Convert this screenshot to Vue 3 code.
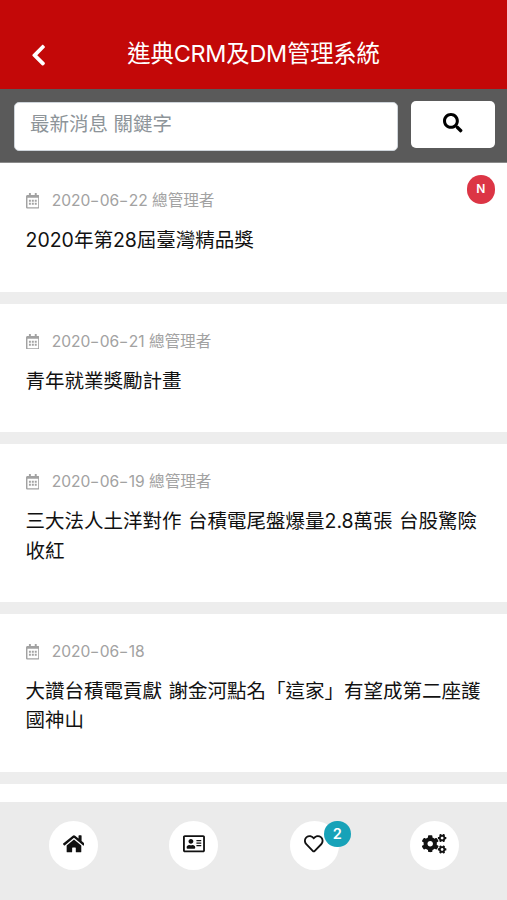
<template>
  <div class="app">
    <header class="topbar">
      <button type="button" class="topbar__back" aria-label="返回">
        <svg viewBox="0 0 320 512">
          <path :d="icons.back" />
        </svg>
      </button>
      <h1 class="topbar__title">進典CRM及DM管理系統</h1>
    </header>

    <form class="search" @submit.prevent>
      <input
        v-model="keyword"
        class="search__input"
        type="text"
        placeholder="最新消息 關鍵字"
      />
      <button type="submit" class="search__button" aria-label="搜尋">
        <svg viewBox="0 0 512 512">
          <path :d="icons.search" />
        </svg>
      </button>
    </form>

    <main class="news">
      <article v-for="item in news" :key="item.title" class="news__item">
        <div class="news__meta">
          <svg class="news__icon" viewBox="0 0 448 512">
            <path :d="icons.calendar" />
          </svg>
          <span>
            <template v-for="(part, i) in item.date.split('-')" :key="i"
              ><span v-if="i" class="news__dash">-</span>{{ part }}</template
            >
            {{ item.author }}
          </span>
        </div>
        <h2 class="news__title">{{ item.title }}</h2>
        <span v-if="item.isNew" class="news__badge">N</span>
      </article>
      <div class="news__item news__item--next"></div>
    </main>

    <nav class="tabs">
      <a v-for="tab in tabs" :key="tab.name" class="tabs__link" :aria-label="tab.label">
        <svg :class="`tabs__icon tabs__icon--${tab.name}`" :viewBox="tab.viewBox">
          <path :d="icons[tab.name]" />
          <template v-if="tab.name === 'cogs'">
            <path :d="icons.smallCog" />
            <path :d="icons.smallCog" transform="translate(0 300)" />
          </template>
        </svg>
        <span v-if="tab.count" class="tabs__badge">{{ tab.count }}</span>
      </a>
    </nav>
  </div>
</template>

<script setup>
import { ref } from "vue";

const keyword = ref("");

const news = [
  {
    date: "2020-06-22",
    author: "總管理者",
    title: "2020年第28屆臺灣精品獎",
    isNew: true,
  },
  {
    date: "2020-06-21",
    author: "總管理者",
    title: "青年就業獎勵計畫",
  },
  {
    date: "2020-06-19",
    author: "總管理者",
    title: "三大法人土洋對作 台積電尾盤爆量2.8萬張 台股驚險收紅",
  },
  {
    date: "2020-06-18",
    author: "",
    title: "大讚台積電貢獻 謝金河點名「這家」有望成第二座護國神山",
  },
];

const tabs = [
  { name: "home", label: "首頁", viewBox: "0 0 576 512" },
  { name: "card", label: "名片", viewBox: "0 0 576 512" },
  { name: "heart", label: "收藏", viewBox: "0 0 512 512", count: 2 },
  { name: "cogs", label: "設定", viewBox: "0 0 640 512" },
];

const icons = {
  back: "M34.52 239.03L228.87 44.69c9.37-9.37 24.57-9.37 33.94 0l22.67 22.67c9.36 9.36 9.37 24.52.04 33.9L131.49 256l154.02 154.75c9.34 9.38 9.32 24.54-.04 33.9l-22.67 22.67c-9.37 9.37-24.57 9.37-33.94 0L34.52 272.97c-9.37-9.37-9.37-24.57 0-33.94z",
  search:
    "M505 442.7L405.3 343c-4.5-4.5-10.6-7-17-7H372c27.6-35.3 44-79.7 44-128C416 93.1 322.9 0 208 0S0 93.1 0 208s93.1 208 208 208c48.3 0 92.7-16.4 128-44v16.3c0 6.4 2.5 12.5 7 17l99.7 99.7c9.4 9.4 24.6 9.4 33.9 0l28.3-28.3c9.4-9.4 9.4-24.6.1-34zM208 336c-70.7 0-128-57.2-128-128 0-70.7 57.2-128 128-128 70.7 0 128 57.2 128 128 0 70.7-57.2 128-128 128z",
  calendar:
    "M400 64h-48V12c0-6.6-5.4-12-12-12h-40c-6.6 0-12 5.4-12 12v52H160V12c0-6.6-5.4-12-12-12h-40c-6.6 0-12 5.4-12 12v52H48C21.5 64 0 85.5 0 112v352c0 26.5 21.5 48 48 48h352c26.5 0 48-21.5 48-48V112c0-26.5-21.5-48-48-48zm-6 400H54c-3.3 0-6-2.7-6-6V160h352v298c0 3.3-2.7 6-6 6zM96 224v64h64v-64zM192 224v64h64v-64zM288 224v64h64v-64zM96 320v64h64v-64zM192 320v64h64v-64zM288 320v64h64v-64z",
  home: "M280.37 148.26L96 300.11V464a16 16 0 0 0 16 16l112.06-.29a16 16 0 0 0 15.92-16V368a16 16 0 0 1 16-16h64a16 16 0 0 1 16 16v95.64a16 16 0 0 0 16 16.05L464 480a16 16 0 0 0 16-16V300L295.67 148.26a12.19 12.19 0 0 0-15.3 0zM571.6 251.47L488 182.56V44.05a12 12 0 0 0-12-12h-56a12 12 0 0 0-12 12v72.61L318.47 43a48 48 0 0 0-61 0L4.34 251.47a12 12 0 0 0-1.6 16.9l25.5 31A12 12 0 0 0 45.15 301l235.22-193.74a12.19 12.19 0 0 1 15.3 0L530.9 301a12 12 0 0 0 16.9-1.6l25.5-31a12 12 0 0 0-1.7-16.93z",
  card: "M528 32H48C21.5 32 0 53.5 0 80v352c0 26.5 21.5 48 48 48h480c26.5 0 48-21.5 48-48V80c0-26.5-21.5-48-48-48zm0 400H48V80h480v352zM208 256c35.3 0 64-28.7 64-64s-28.7-64-64-64-64 28.7-64 64 28.7 64 64 64zm-89.6 128h179.2c12.4 0 22.4-8.6 22.4-19.2v-19.2c0-31.8-30.1-57.6-67.2-57.6-10.8 0-18.7 8-44.8 8-26.9 0-33.4-8-44.8-8-37.1 0-67.2 25.8-67.2 57.6v19.2c0 10.6 10 19.2 22.4 19.2zM360 320h112c4.4 0 8-3.6 8-8v-16c0-4.4-3.6-8-8-8H360c-4.4 0-8 3.6-8 8v16c0 4.4 3.6 8 8 8zm0-64h112c4.4 0 8-3.6 8-8v-16c0-4.4-3.6-8-8-8H360c-4.4 0-8 3.6-8 8v16c0 4.4 3.6 8 8 8zm0-64h112c4.4 0 8-3.6 8-8v-16c0-4.4-3.6-8-8-8H360c-4.4 0-8 3.6-8 8v16c0 4.4 3.6 8 8 8z",
  heart:
    "M458.4 64.3C400.6 15.7 311.3 23 256 79.3 200.7 23 111.4 15.6 53.6 64.3-21.6 127.6-10.6 230.8 43 285.5l175.4 178.7c10 10.2 23.4 15.9 37.6 15.9 14.3 0 27.6-5.6 37.6-15.8L469 285.6c53.5-54.7 64.7-157.9-10.6-221.3zm-23.6 187.5L259.4 430.5c-2.4 2.4-4.4 2.4-6.8 0L77.2 251.8c-36.5-37.2-43.9-107.6 7.3-150.7 38.9-32.7 98.9-27.8 136.5 10.5l35 35.7 35-35.7c37.8-38.5 97.8-43.2 136.5-10.6 51.1 43.1 43.5 113.9 7.3 150.8z",
  cogs: "M386.3 286.1l33.7 16.8c10.1 5.8 14.5 18.1 10.5 29.1-8.9 24.2-26.4 46.4-42.6 65.8-7.4 8.9-20.2 11.1-30.3 5.3l-29.1-16.8c-16 13.7-34.6 24.6-54.9 31.7v33.6c0 11.6-8.3 21.6-19.7 23.6-24.6 4.2-50.4 4.4-75.9 0-11.5-2-20-11.9-20-23.6V418c-20.3-7.2-38.9-18-54.9-31.7L74 403c-10 5.8-22.9 3.6-30.3-5.3-16.2-19.4-33.3-41.6-42.2-65.7-4-10.9.4-23.2 10.5-29.1l33.3-16.8c-3.9-20.9-3.9-42.4 0-63.4L12 205.8c-10.1-5.8-14.6-18.1-10.5-29 8.9-24.2 26-46.4 42.2-65.8 7.4-8.9 20.2-11.1 30.3-5.3l29.1 16.8c16-13.7 34.6-24.6 54.9-31.7V57.1c0-11.5 8.2-21.5 19.6-23.5 24.6-4.2 50.5-4.4 76-.1 11.5 2 20 11.9 20 23.6v33.6c20.3 7.2 38.9 18 54.9 31.7l29.1-16.8c10-5.8 22.9-3.6 30.3 5.3 16.2 19.4 33.2 41.6 42.1 65.8 4 10.9.1 23.2-10 29.1l-33.7 16.8c3.9 21 3.9 42.5 0 63.5zm-117.6 21.1c59.2-77-28.7-164.9-105.7-105.7-59.2 77 28.7 164.9 105.7 105.7z",
  smallCog:
    "M512.1 191l-8.2 14.3c-3 5.3-9.4 7.5-15.1 5.4-11.8-4.4-22.6-10.7-32.1-18.6-4.6-3.8-5.8-10.5-2.8-15.7l8.2-14.3c-6.9-8-12.3-17.3-15.9-27.4h-16.5c-6 0-11.2-4.3-12.2-10.3-2-12-2.1-24.6 0-37.1 1-6 6.2-10.4 12.2-10.4h16.5c3.6-10.1 9-19.4 15.9-27.4l-8.2-14.3c-3-5.2-1.9-11.9 2.8-15.7 9.5-7.9 20.4-14.2 32.1-18.6 5.7-2.1 12.1.1 15.1 5.4l8.2 14.3c10.5-1.9 21.2-1.9 31.7 0L552 6.3c3-5.3 9.4-7.5 15.1-5.4 11.8 4.4 22.6 10.7 32.1 18.6 4.6 3.8 5.8 10.5 2.8 15.7l-8.2 14.3c6.9 8 12.3 17.3 15.9 27.4h16.5c6 0 11.2 4.3 12.2 10.3 2 12 2.1 24.6 0 37.1-1 6-6.2 10.4-12.2 10.4h-16.5c-3.6 10.1-9 19.4-15.9 27.4l8.2 14.3c3 5.2 1.9 11.9-2.8 15.7-9.5 7.9-20.4 14.2-32.1 18.6-5.7 2.1-12.1-.1-15.1-5.4l-8.2-14.3c-10.4 1.9-21.2 1.9-31.7 0zm-10.5-58.8c38.5 29.6 82.4-14.3 52.8-52.8-38.5-29.7-82.4 14.3-52.8 52.8z",
};
</script>

<style>
body {
  background: #ffffff;
}
</style>

<style scoped>
.app {
  display: flex;
  flex-direction: column;
  height: 100vh;
  overflow: hidden;
  color: #111111;
  font-family: Inter, "Noto Sans CJK TC", sans-serif;
  font-size: 19.5px;
  line-height: 1.5;
}

svg {
  display: block;
  fill: currentColor;
}

button {
  padding: 0;
  border: 0;
  color: inherit;
  cursor: pointer;
}

.topbar {
  flex: none;
  display: grid;
  grid-template-columns: 78px 1fr 78px;
  align-items: center;
  box-sizing: border-box;
  height: 89px;
  padding-top: 18px;
  background: #c30808;
  color: #ffffff;
}

.topbar__back {
  display: grid;
  place-items: center;
  height: 48px;
  padding-top: 4px;
  background: transparent;
}

.topbar__back svg {
  height: 24.4px;
}

.topbar__title {
  margin: 0;
  font-size: 23.4px;
  font-weight: 400;
  line-height: 35px;
  letter-spacing: -0.22px;
  text-align: center;
  white-space: nowrap;
}

.search {
  flex: none;
  display: flex;
  align-items: flex-start;
  gap: 13px;
  box-sizing: border-box;
  height: 74.4px;
  padding: 12px 12px 0 14px;
  border-bottom: 1px solid #8a8a8a;
  background: #5a5a5a;
}

.search__input {
  flex: 1;
  min-width: 0;
  box-sizing: border-box;
  height: 49px;
  margin-top: 1px;
  padding: 0 15px 5px;
  border: 1px solid #ced4da;
  border-radius: 5px;
  background: #ffffff;
  color: #495057;
  font: inherit;
}

.search__input::placeholder {
  color: #8d9499;
  opacity: 1;
}

.search__button {
  display: grid;
  place-items: center;
  width: 84px;
  height: 47px;
  padding-bottom: 3px;
  border-radius: 5px;
  background: #ffffff;
  color: #000000;
}

.search__button svg {
  width: 19.5px;
}

.news {
  flex: 1;
  min-height: 0;
  overflow: hidden;
}

.news__item {
  position: relative;
  padding: 26px 25px 36.3px 25.5px;
  border-bottom: 12px solid #ededed;
  background: #ffffff;
}

.news__item--next {
  border-bottom: 0;
}

.news__meta {
  display: flex;
  align-items: center;
  gap: 12.5px;
  height: 23.4px;
  color: #a2a2a2;
  font-size: 15.6px;
}

.news__icon {
  height: 15.6px;
}

.news__dash {
  display: inline-block;
  width: 9.4px;
  text-align: center;
  transform: scaleX(1.35);
}

.news__title {
  margin: 13.6px 0 0;
  font-size: 19.5px;
  font-weight: 400;
  line-height: 29.25px;
  word-spacing: 1px;
}

.news__badge {
  position: absolute;
  top: 12px;
  right: 12px;
  width: 28.5px;
  height: 28.5px;
  border-radius: 50%;
  background: #dc3545;
  color: #ffffff;
  font-size: 12px;
  font-weight: 600;
  line-height: 28.5px;
  text-align: center;
}

.tabs {
  flex: none;
  display: flex;
  justify-content: space-between;
  align-items: flex-start;
  box-sizing: border-box;
  height: 98px;
  padding: 18.5px 48px 0 49px;
  background: #ebebeb;
}

.tabs__link {
  position: relative;
  display: grid;
  place-items: center;
  box-sizing: border-box;
  width: 49px;
  height: 49px;
  padding-bottom: 2px;
  border-radius: 50%;
  background: #ffffff;
  color: #111111;
}

.tabs__icon {
  height: 19.5px;
}

.tabs__badge {
  position: absolute;
  top: 0;
  right: -12px;
  width: 26.5px;
  height: 26.5px;
  border-radius: 50%;
  background: #17a2b8;
  color: #ffffff;
  font-size: 14.6px;
  font-weight: 600;
  line-height: 26.5px;
  text-align: center;
}
</style>
